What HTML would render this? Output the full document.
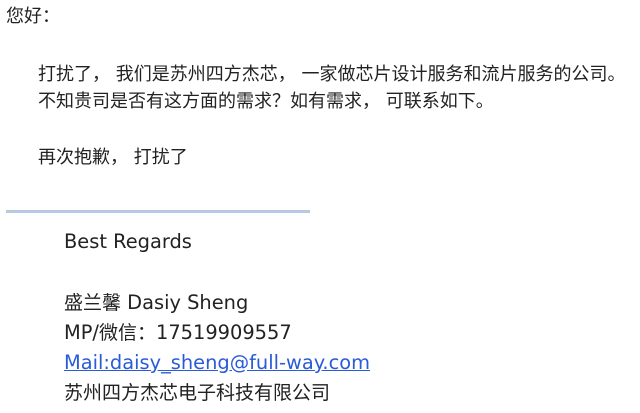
<!DOCTYPE html>
<html><head><meta charset="utf-8"><style>
body{margin:0;width:640px;height:413px;background:#fff;position:relative;overflow:hidden;color:#222;font-family:"DejaVu Sans","Noto Sans CJK SC",sans-serif;}
.l{position:absolute;white-space:nowrap;line-height:24px;font-size:18px;}
.s{font-size:19.4px;}
.c{font-size:19px;}
a{color:#2a5bd7;text-decoration:underline;}
</style></head><body>
<div class="l" style="left:6px;top:5px">您好：</div>
<div class="l" style="left:38px;top:63px">打扰了， 我们是苏州四方杰芯， 一家做芯片设计服务和流片服务的公司。</div>
<div class="l" style="left:38px;top:90px">不知贵司是否有这方面的需求？如有需求， 可联系如下。</div>
<div class="l" style="left:38px;top:146px">再次抱歉， 打扰了</div>
<div style="position:absolute;left:6px;top:210px;width:304px;height:3px;background:#b9c9e2"></div>
<div class="l s" style="left:64px;top:230px">Best Regards</div>
<div class="l s" style="left:64px;top:291px"><span class="c">盛兰馨</span> Dasiy Sheng</div>
<div class="l s" style="left:64px;top:321px">MP/<span class="c">微信：</span>17519909557</div>
<div class="l s" style="left:64px;top:351px"><a>Mail:daisy_sheng@full-way.com</a></div>
<div class="l c" style="left:64px;top:381px">苏州四方杰芯电子科技有限公司</div>
</body></html>
